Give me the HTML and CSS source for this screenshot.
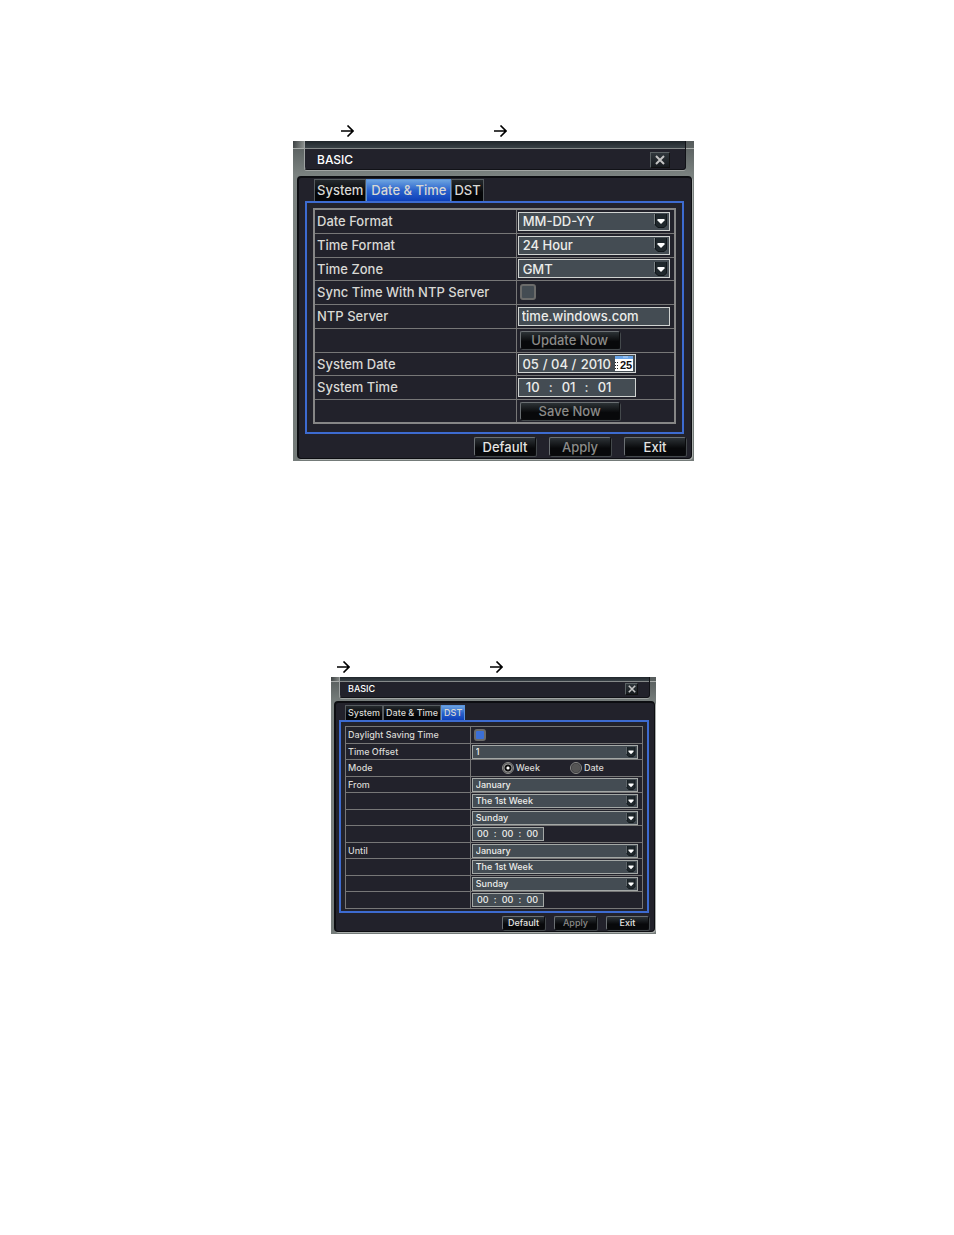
FILE: index.html
```html
<!DOCTYPE html>
<html lang="en">
<head>
  <meta charset="utf-8">
  <title>Basic configuration</title>
  <link rel="stylesheet" href="styles.css">
</head>
<body>

<svg class="defs" aria-hidden="true">
  <symbol id="arrow" viewBox="0 0 13 12">
    <path d="M0 6H12M6.5 0.5L12 6L6.5 11.5" fill="none" stroke="#000" stroke-width="1.6"/>
  </symbol>
  <symbol id="drop" viewBox="0 0 14 16">
    <path d="M1 1H13V12L10 15H4L1 12Z" fill="#20282d"/>
    <path d="M1.5 1V12L4 14.5H10L12.5 12V1" fill="none" stroke="#11161a"/>
    <path d="M0.5 1V11" stroke="#7d8588"/>
    <path d="M3.5 6H10.5V7.5L7 11L3.5 7.5Z" fill="#fff"/>
  </symbol>
  <symbol id="close" viewBox="0 0 10 10">
    <path d="M1 1L9 9M9 1L1 9" fill="none" stroke="#c4c4c4" stroke-width="2"/>
  </symbol>
</svg>

<main>

<section class="figure">
  <p class="path">
    <svg><use href="#arrow"/></svg>
    <svg><use href="#arrow"/></svg>
  </p>
  <form class="dialog">
    <header class="title">
      <h1>BASIC</h1>
      <button type="button" class="close" aria-label="Close"><svg><use href="#close"/></svg></button>
    </header>
    <div class="body">
      <nav class="tabs">
        <a href="#system">System</a>
        <a href="#datetime" class="active">Date &amp; Time</a>
        <a href="#dst">DST</a>
      </nav>
      <div class="panel">
        <table>
          <colgroup><col class="names"><col></colgroup>
          <tr>
            <td><label for="dformat">Date Format</label></td>
            <td><span class="pick"><select id="dformat"><option>MM-DD-YY</option></select><svg><use href="#drop"/></svg></span></td>
          </tr>
          <tr>
            <td><label for="tformat">Time Format</label></td>
            <td><span class="pick"><select id="tformat"><option>24 Hour</option></select><svg><use href="#drop"/></svg></span></td>
          </tr>
          <tr>
            <td><label for="zone">Time Zone</label></td>
            <td><span class="pick"><select id="zone"><option>GMT</option></select><svg><use href="#drop"/></svg></span></td>
          </tr>
          <tr>
            <td><label for="sync">Sync Time With NTP Server</label></td>
            <td><input type="checkbox" id="sync"></td>
          </tr>
          <tr>
            <td><label for="ntp">NTP Server</label></td>
            <td><input type="text" class="server" id="ntp" value="time.windows.com"></td>
          </tr>
          <tr>
            <td></td>
            <td><button type="button" class="btn wide" disabled>Update Now</button></td>
          </tr>
          <tr>
            <td><label for="month">System Date</label></td>
            <td>
              <div class="parts date">
                <input id="month" value="05" aria-label="Month"><i>/</i>
                <input value="04" aria-label="Day"><i>/</i>
                <input class="year" value="2010" aria-label="Year">
                <button type="button" class="calendar" aria-label="Pick a date">
                  <svg viewBox="0 0 18 15">
                    <path d="M0 0H18V15H0Z" fill="#fff"/>
                    <path d="M0 0H18V3H0Z" fill="#6aa5e8"/>
                    <path d="M8 1H13" stroke="#b9d6f7"/>
                    <path d="M0 6.5H4M0 9.5H4M0 12.5H4" stroke="#222" stroke-dasharray="1 1"/>
                    <text x="5" y="13">25</text>
                  </svg>
                </button>
              </div>
            </td>
          </tr>
          <tr>
            <td><label for="hour">System Time</label></td>
            <td>
              <div class="parts time">
                <input id="hour" value="10" aria-label="Hour"><i>:</i>
                <input value="01" aria-label="Minute"><i>:</i>
                <input value="01" aria-label="Second">
              </div>
            </td>
          </tr>
          <tr>
            <td></td>
            <td><button type="button" class="btn wide" disabled>Save Now</button></td>
          </tr>
        </table>
      </div>
      <footer class="actions">
        <button type="button" class="btn">Default</button>
        <button type="button" class="btn" disabled>Apply</button>
        <button type="button" class="btn">Exit</button>
      </footer>
    </div>
  </form>
</section>

<section class="figure small">
  <p class="path">
    <svg><use href="#arrow"/></svg>
    <svg><use href="#arrow"/></svg>
  </p>
  <form class="dialog">
    <header class="title">
      <h1>BASIC</h1>
      <button type="button" class="close" aria-label="Close"><svg><use href="#close"/></svg></button>
    </header>
    <div class="body">
      <nav class="tabs">
        <a href="#system">System</a>
        <a href="#datetime">Date &amp; Time</a>
        <a href="#dst" class="active">DST</a>
      </nav>
      <div class="panel">
        <table>
          <colgroup><col class="names"><col></colgroup>
          <tr>
            <td><label for="saving">Daylight Saving Time</label></td>
            <td><input type="checkbox" id="saving" checked></td>
          </tr>
          <tr>
            <td><label for="offset">Time Offset</label></td>
            <td><span class="pick"><select id="offset"><option>1</option></select><svg><use href="#drop"/></svg></span></td>
          </tr>
          <tr>
            <td>Mode</td>
            <td>
              <div class="modes">
                <label><input type="radio" name="mode" checked>Week</label>
                <label><input type="radio" name="mode">Date</label>
              </div>
            </td>
          </tr>
          <tr>
            <td><label for="from">From</label></td>
            <td><span class="pick"><select id="from"><option>January</option></select><svg><use href="#drop"/></svg></span></td>
          </tr>
          <tr>
            <td></td>
            <td><span class="pick"><select aria-label="From week"><option>The 1st Week</option></select><svg><use href="#drop"/></svg></span></td>
          </tr>
          <tr>
            <td></td>
            <td><span class="pick"><select aria-label="From day"><option>Sunday</option></select><svg><use href="#drop"/></svg></span></td>
          </tr>
          <tr>
            <td></td>
            <td>
              <div class="parts time">
                <input value="00" aria-label="From hour"><i>:</i>
                <input value="00" aria-label="From minute"><i>:</i>
                <input value="00" aria-label="From second">
              </div>
            </td>
          </tr>
          <tr>
            <td><label for="until">Until</label></td>
            <td><span class="pick"><select id="until"><option>January</option></select><svg><use href="#drop"/></svg></span></td>
          </tr>
          <tr>
            <td></td>
            <td><span class="pick"><select aria-label="Until week"><option>The 1st Week</option></select><svg><use href="#drop"/></svg></span></td>
          </tr>
          <tr>
            <td></td>
            <td><span class="pick"><select aria-label="Until day"><option>Sunday</option></select><svg><use href="#drop"/></svg></span></td>
          </tr>
          <tr>
            <td></td>
            <td>
              <div class="parts time">
                <input value="00" aria-label="Until hour"><i>:</i>
                <input value="00" aria-label="Until minute"><i>:</i>
                <input value="00" aria-label="Until second">
              </div>
            </td>
          </tr>
        </table>
      </div>
      <footer class="actions">
        <button type="button" class="btn">Default</button>
        <button type="button" class="btn" disabled>Apply</button>
        <button type="button" class="btn">Exit</button>
      </footer>
    </div>
  </form>
</section>

</main>
</body>
</html>
```
FILE: styles.css
```css
* {
  box-sizing: border-box;
}

body {
  margin: 0;
  background: #fff;
  color: #d8d8d4;
  font: 500 13px/16px Inter, "Liberation Sans", Arial, sans-serif;
}

h1, p {
  margin: 0;
}

input, select, button {
  margin: 0;
  padding: 0;
  font: inherit;
  color: inherit;
}

.defs {
  display: none;
}

main {
  display: flex;
  flex-direction: column;
  align-items: center;
  gap: 200px;
  padding: 125px 0 40px 33px;
}

.figure {
  width: 100%;
  max-width: 401px;
}

.path {
  display: flex;
  gap: 140px;
  padding: 0 0 4px 48px;
}

.path svg {
  width: 13px;
  height: 12px;
}

/* window frame */

.dialog {
  padding: 0 2px 2px 4px;
  background:
    linear-gradient(100deg, #3c4142, #8d9290 12px, transparent 13px) 0 0 / 100% 7px no-repeat,
    linear-gradient(#a8acaa, #a8acaa) 0 7px / 100% 1px no-repeat,
    linear-gradient(#555b5b, #7b8280 34px, #747b79);
}

.title {
  display: flex;
  align-items: center;
  justify-content: space-between;
  height: 29px;
  margin: 0 6px 6px 7px;
  padding: 9px 15px 0 12px;
  border: 1px solid #111217;
  border-top: 0;
  border-left-color: #9fa3a3;
  border-radius: 0 0 3px 3px;
  box-shadow: 0 1px #a0a4a2;
  background:
    linear-gradient(#20262b, #3a4247) 0 0 / 100% 7px no-repeat,
    linear-gradient(#858989, #858989) 0 7px / 100% 1px no-repeat,
    #22222b;
}

.title h1 {
  font-size: 12px;
  font-weight: 500;
  color: #fff;
}

.close {
  display: grid;
  place-items: center;
  width: 20px;
  height: 16px;
  border: 1px solid #4d5356;
  border-color: #5b6264 #111 #111 #5b6264;
  background: linear-gradient(#30373c, #171b1f);
}

.close svg {
  width: 10px;
  height: 10px;
}

.body {
  padding: 1px 5px 2px 6px;
  border: 2px solid #0c0d11;
  border-width: 2px 1px 1px 2px;
  border-radius: 4px;
  box-shadow: 1px 1px #a9adab;
  background: #22222b;
}

.tabs {
  display: flex;
  margin-left: 9px;
}

.tabs a {
  height: 22px;
  padding: 0 2px;
  border: 1px solid #555b5e;
  border-width: 1px 1px 0;
  line-height: 20px;
  color: inherit;
  text-decoration: none;
  white-space: nowrap;
  background: linear-gradient(#24292d, #050608 60%);
}

.tabs .active {
  padding: 0 4px;
  border-color: #5b93dc;
  background: linear-gradient(#6ba3e0, #2a62cc 50%, #0d3fb8);
}

.panel {
  margin-right: 2px;
  padding: 5px 6px 8px;
  border: 2px solid #3d6bd0;
}

/* settings grid */

table {
  width: 100%;
  table-layout: fixed;
  border-collapse: collapse;
  border: 2px solid #868686;
}

.names {
  width: 56%;
}

td {
  height: 24px;
  padding: 0 4px 0 2px;
  border: 1px solid #777;
}

td:last-child {
  padding-left: 1px;
}

tr:nth-child(4n+3) td {
  height: 23px;
}

.pick {
  display: grid;
  align-items: center;
}

.pick select, .pick svg {
  grid-area: 1 / 1;
}

.pick select {
  appearance: none;
  padding-left: 4px;
  cursor: pointer;
}

.pick svg {
  justify-self: end;
  width: 14px;
  height: 16px;
  margin-right: 2px;
  pointer-events: none;
}

select, .server, .parts {
  display: flex;
  width: 100%;
  height: 19px;
  border: 1px solid #d0d3d1;
  border-radius: 0;
  background: #444c53;
  color: #ececea;
}

.server {
  padding-left: 3px;
}

.parts {
  align-items: center;
  width: 118px;
}

.parts input {
  width: 18px;
  height: 16px;
  border: 0;
  background: none;
  text-align: center;
}

.parts i {
  font-style: normal;
}

.date {
  gap: 3px;
  padding-left: 3px;
}

.date .year {
  width: 33px;
}

.time {
  gap: 7px;
  padding-left: 5px;
}

.calendar {
  flex: none;
  width: 18px;
  height: 15px;
  border: 0;
  background: none;
}

.calendar svg {
  display: block;
}

.calendar text {
  font: bold 11px "Liberation Sans", sans-serif;
  fill: #111;
}

[type=checkbox] {
  appearance: none;
  display: block;
  width: 16px;
  height: 16px;
  margin-left: 2px;
  border: 2px solid #6b6b6a;
  border-radius: 3px;
  background: #444c53;
}

[type=checkbox]:checked {
  background: #3b6fd6;
}

[type=radio] {
  appearance: none;
  width: 12px;
  height: 12px;
  border: 1px solid #8a8a88;
  border-radius: 50%;
  background: radial-gradient(#555 4px, #2a2a2e 5px);
}

[type=radio]:checked {
  background: radial-gradient(#fff 1px, #0a0a0a 2px 3px, #aaa 4px, #333 5px);
}

.modes {
  display: flex;
  gap: 30px;
  padding-left: 30px;
}

.modes label {
  display: flex;
  align-items: center;
  gap: 2px;
}

/* buttons */

.btn {
  width: 62px;
  height: 19px;
  border: 1px solid #0a0b0d;
  border-top-color: #6b7073;
  border-left-color: #6b7073;
  border-radius: 2px;
  box-shadow: 1px 1px #44494c;
  background: linear-gradient(#2c3236, #08090b 60%);
  color: #e4e4e2;
}

.btn:disabled {
  color: #8b8b89;
}

.wide {
  display: block;
  width: 100px;
  height: 18px;
  margin-left: 2px;
}

.actions {
  display: flex;
  justify-content: flex-end;
  gap: 13px;
  padding-top: 3px;
}

/* compact window */

.small {
  max-width: 325px;
  font-size: 9px;
  line-height: 12px;
}

.small .path {
  padding-left: 6px;
}

.small .dialog {
  padding: 0 1px 2px 3px;
  background:
    linear-gradient(100deg, #3c4142, #8d9290 10px, transparent 11px) 0 0 / 100% 4px no-repeat,
    linear-gradient(#a8acaa, #a8acaa) 0 4px / 100% 1px no-repeat,
    linear-gradient(#555b5b, #7b8280 28px, #747b79);
}

.small .title {
  height: 21px;
  margin: 0 5px 3px;
  padding: 4px 11px 0 8px;
  background:
    linear-gradient(#20262b, #3a4247) 0 0 / 100% 4px no-repeat,
    linear-gradient(#858989, #858989) 0 4px / 100% 1px no-repeat,
    #22222b;
}

.small .title h1 {
  font-size: 9px;
}

.small .close {
  width: 13px;
  height: 12px;
}

.small .close svg {
  width: 8px;
  height: 8px;
}

.small .body {
  padding: 2px 5px 1px 3px;
}

.small .tabs {
  margin-left: 6px;
}

.small .tabs a {
  height: 15px;
  padding: 0 2px;
  line-height: 14px;
}

.small .panel {
  margin-right: 0;
  padding: 4px 4px 2px;
}

.small table {
  border-width: 1px;
}

.small .names {
  width: 42%;
}

.small tr:nth-child(odd) td {
  height: 17px;
}

.small tr:nth-child(even) td {
  height: 16px;
}

.small select, .small .parts {
  height: 14px;
  border-color: #a4a8a6;
}

.small .pick select {
  padding-left: 3px;
}

.small .pick svg {
  width: 10px;
  height: 12px;
}

.small .parts {
  width: 72px;
}

.small .parts input {
  width: 14px;
  height: 12px;
}

.small .time {
  gap: 4px;
  padding-left: 3px;
}

.small [type=checkbox] {
  width: 12px;
  height: 12px;
}

.small .btn {
  width: 43px;
  height: 14px;
}

.small .actions {
  gap: 9px;
  padding-top: 3px;
}
```
